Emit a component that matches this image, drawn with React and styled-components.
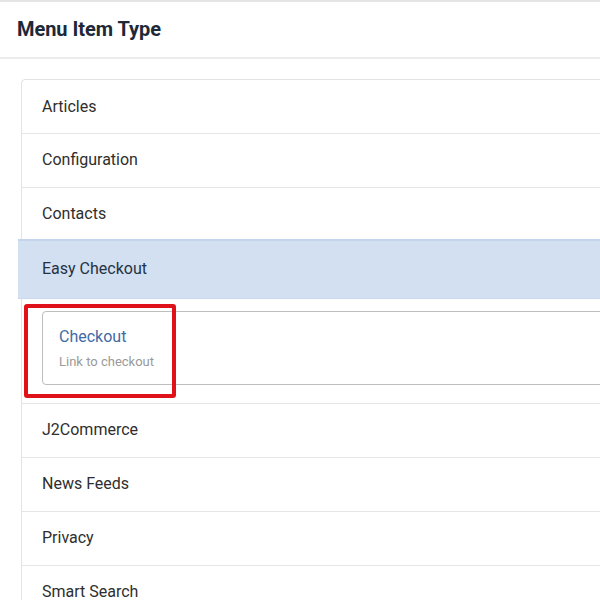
import React from "react";
import styled, { createGlobalStyle } from "styled-components";

const Global = createGlobalStyle`
  html, body { margin: 0; padding: 0; background: #fff; overflow: hidden; }
  body { font-family: Roboto, "Noto Sans", Arial, sans-serif; width: 600px; height: 600px; }
`;

const Page = styled.div`
  width: 600px;
  height: 600px;
  overflow: hidden;
  border-top: 2px solid #e4e4e4;
  box-sizing: border-box;
`;

const Header = styled.header`
  height: 55px;
  display: flex;
  align-items: center;
  padding-left: 17px;
  border-bottom: 2px solid #ececec;
`;

const Title = styled.h1`
  margin: 0 0 2px;
  font-size: 20px;
  font-weight: 700;
  color: #1d2838;
  letter-spacing: -0.05px;
`;

const Body = styled.div`
  padding: 20px 0 0 21px;
`;

const List = styled.div`
  width: 640px;
  border: 1px solid #e3e3e3;
  border-radius: 4px;
  background: #fff;
`;

const Row = styled.div`
  height: 53px;
  display: flex;
  align-items: center;
  padding: 0 0 2px 20px;
  box-sizing: border-box;
  font-size: 16px;
  color: #2e2e2e;
  border-top: ${(p) => (p.$first ? "none" : "1px solid #e6e6e6")};
  ${(p) => (p.$first ? "height: 53px; padding-bottom: 0;" : "height: 54px;")}
`;

const ActiveRow = styled.div`
  height: 60px;
  margin: -2px 0 0 -4px;
  padding: 0 0 3px 24px;
  display: flex;
  align-items: center;
  font-size: 16px;
  color: #243243;
  background: #d3e0f1;
  border-top: 2px solid #c3d4ec;
  border-bottom: 1px solid #c9d8ee;
  box-sizing: border-box;
  position: relative;
`;

const Panel = styled.div`
  position: relative;
  padding: 12px 0 18px 20px;
`;

const ItemCard = styled.div`
  height: 72px;
  border: 1px solid #bdbdbd;
  border-radius: 4px;
  padding-left: 16px;
  display: flex;
  flex-direction: column;
  justify-content: center;
  gap: 8px;
`;

const ItemTitle = styled.span`
  font-size: 16px;
  color: #3f6aa5;
`;

const ItemDesc = styled.span`
  font-size: 13px;
  color: #9a9a9a;
`;

const Annotation = styled.div`
  position: absolute;
  left: 2px;
  top: 5px;
  width: 152px;
  height: 94px;
  border: 4px solid #e01219;
  border-radius: 3px;
  box-sizing: border-box;
  pointer-events: none;
`;

export default function App() {
  return (
    <>
      <Global />
      <Page>
        <Header>
          <Title>Menu Item Type</Title>
        </Header>
        <Body>
          <List>
            <Row $first>Articles</Row>
            <Row>Configuration</Row>
            <Row>Contacts</Row>
            <ActiveRow>Easy Checkout</ActiveRow>
            <Panel>
              <ItemCard>
                <ItemTitle>Checkout</ItemTitle>
                <ItemDesc>Link to checkout</ItemDesc>
              </ItemCard>
              <Annotation />
            </Panel>
            <Row>J2Commerce</Row>
            <Row>News Feeds</Row>
            <Row>Privacy</Row>
            <Row>Smart Search</Row>
          </List>
        </Body>
      </Page>
    </>
  );
}
